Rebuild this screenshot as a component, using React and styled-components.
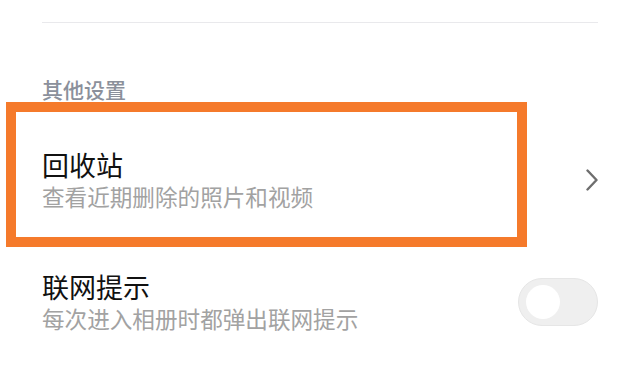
import React from "react";
import styled, { createGlobalStyle } from "styled-components";

const Global = createGlobalStyle`
  html, body { margin: 0; padding: 0; background: #ffffff; }
  body {
    width: 640px; height: 384px; overflow: hidden;
    font-family: "Noto Sans CJK SC", "Noto Sans", sans-serif;
  }
`;

const Page = styled.div`
  display: flex;
  flex-direction: column;
  padding: 0 42px;
  background: #ffffff;
`;

const Divider = styled.div`
  height: 1px;
  margin-top: 22px;
  background: #e9e9ec;
`;

const SectionHeader = styled.div`
  margin-top: 52px;
  font-size: 21px;
  line-height: 28px;
  color: #8b909b;
  font-weight: 500;
`;

const Row = styled.div`
  position: relative;
  display: flex;
  align-items: center;
  justify-content: space-between;
  height: ${(p) => p.$h}px;
  margin-top: ${(p) => p.$mt || 0}px;
`;

const TextBlock = styled.div`
  display: flex;
  flex-direction: column;
`;

const Title = styled.div`
  font-size: 27px;
  line-height: 34px;
  color: #111111;
`;

const Subtitle = styled.div`
  font-size: 22.6px;
  line-height: 30px;
  color: #a2a2a2;
`;

const Highlight = styled.div`
  position: absolute;
  left: -36px;
  top: -18px;
  width: 521px;
  height: 145px;
  box-sizing: border-box;
  border: 10px solid #f57a2b;
  pointer-events: none;
`;

const Toggle = styled.div`
  width: 80px;
  height: 48px;
  box-sizing: border-box;
  border-radius: 24px;
  background: #efefef;
  border: 1px solid #e6e6e6;
  display: flex;
  align-items: center;
  padding-left: 7px;
`;

const Knob = styled.div`
  width: 34px;
  height: 34px;
  border-radius: 50%;
  background: #ffffff;
`;

const Chevron = () => (
  <svg width="12" height="22" viewBox="0 0 12 22" fill="none">
    <path d="M1.5 1.5 L10.5 11 L1.5 20.5" stroke="#6e6e6e" strokeWidth="2.4" strokeLinecap="round" strokeLinejoin="round" />
  </svg>
);

export default function App() {
  return (
    <>
      <Global />
      <Page>
        <Divider />
        <SectionHeader>其他设置</SectionHeader>
        <Row $h={120} $mt={17}>
          <Highlight />
          <TextBlock>
            <Title>回收站</Title>
            <Subtitle>查看近期删除的照片和视频</Subtitle>
          </TextBlock>
          <Chevron />
        </Row>
        <Row $h={124}>
          <TextBlock>
            <Title>联网提示</Title>
            <Subtitle>每次进入相册时都弹出联网提示</Subtitle>
          </TextBlock>
          <Toggle>
            <Knob />
          </Toggle>
        </Row>
      </Page>
    </>
  );
}
